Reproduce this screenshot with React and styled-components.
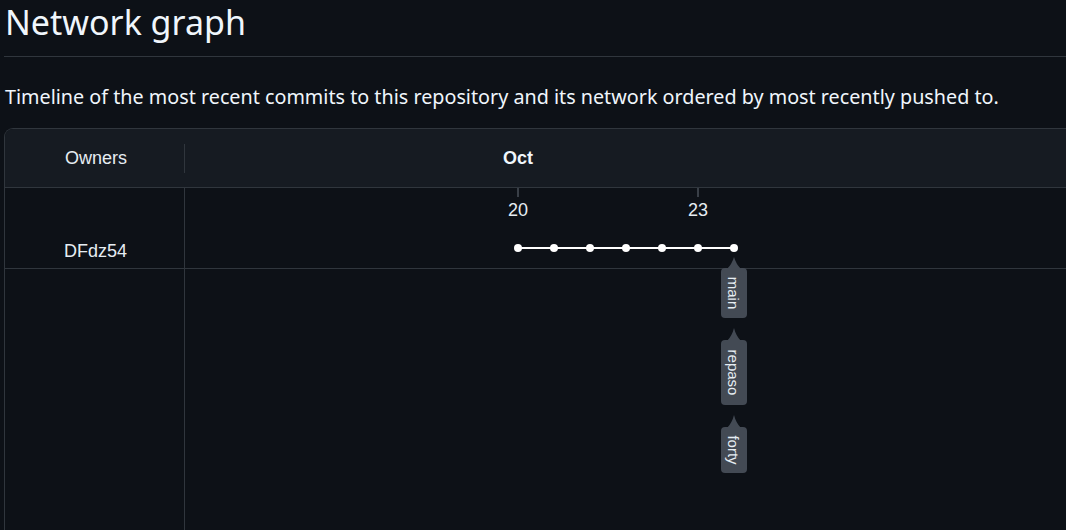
import React from "react";
import styled, { createGlobalStyle } from "styled-components";

const GlobalStyle = createGlobalStyle`
  html, body {
    margin: 0;
    padding: 0;
    background: #0d1117;
    color: #e6edf3;
    overflow: hidden;
  }
`;

const commits = [0, 1, 2, 3, 4, 5, 6];
const days = [
  { label: "20", x: 333 },
  { label: "23", x: 513 },
];
const branches = [
  { name: "main", tip: 69, top: 80, bottom: 130 },
  { name: "repaso", tip: 140, top: 152, bottom: 217 },
  { name: "forty", tip: 227, top: 239, bottom: 285 },
];

export default function App() {
  const headX = 333 + 36 * 6;
  return (
    <>
      <GlobalStyle />
      <Page>
        <Subhead>
          <Title>Network graph</Title>
        </Subhead>
        <Description>
          Timeline of the most recent commits to this repository and its network ordered by most recently pushed to.
        </Description>
        <GraphBox>
          <HeaderRow>
            <OwnersHead>Owners</OwnersHead>
            <MonthHead>
              <Month>Oct</Month>
            </MonthHead>
          </HeaderRow>
          <Body>
            <OwnerRow>
              <OwnerCell>DFdz54</OwnerCell>
              <GraphCell />
            </OwnerRow>
            <FillRow>
              <OwnerCell />
              <GraphCell />
            </FillRow>
            <Canvas width="900" height="360">
              {days.map((d) => (
                <g key={d.label}>
                  <line x1={d.x} y1={0} x2={d.x} y2={9} stroke="#484f58" strokeWidth="1.5" />
                  <DayLabel x={d.x} y={28} textAnchor="middle">{d.label}</DayLabel>
                </g>
              ))}
              <line x1={333} y1={60} x2={headX} y2={60} stroke="#ffffff" strokeWidth="2" />
              {commits.map((i) => (
                <circle key={i} cx={333 + 36 * i} cy={60} r="4" fill="#ffffff" />
              ))}
              {branches.map((b) => (
                <g key={b.name}>
                  <path
                    d={`M${headX} ${b.tip} Q${headX + 2} ${b.top - 4} ${headX + 7} ${b.top + 1} L${headX - 7} ${b.top + 1} Q${headX - 2} ${b.top - 4} ${headX} ${b.tip} Z`}
                    fill="#434a54"
                  />
                  <rect x={headX - 13} y={b.top} width="26" height={b.bottom - b.top} rx="4" fill="#434a54" />
                  <BranchLabel
                    transform={`translate(${headX - 1} ${(b.top + b.bottom) / 2}) rotate(90)`}
                    textAnchor="middle"
                    dominantBaseline="central"
                  >
                    {b.name}
                  </BranchLabel>
                </g>
              ))}
            </Canvas>
          </Body>
        </GraphBox>
      </Page>
    </>
  );
}

const Page = styled.div`
  padding-left: 4px;
  font-family: "Noto Sans", "Open Sans", sans-serif;
`;

const Subhead = styled.div`
  border-bottom: 1px solid #30363d;
  padding-bottom: 11px;
`;

const Title = styled.h2`
  margin: 0;
  padding-left: 1px;
  font-size: 34px;
  font-weight: 400;
  line-height: 45px;
  color: #f0f6fc;
`;

const Description = styled.p`
  margin: 25px 0 16px 1px;
  font-size: 19.75px;
  line-height: 30px;
  color: #f0f6fc;
`;

const GraphBox = styled.div`
  width: 1100px;
  border: 1px solid #30363d;
  border-right: none;
  border-top-left-radius: 9px;
  overflow: hidden;
  font-family: "Liberation Sans", Arial, sans-serif;
  font-size: 18px;
`;

const HeaderRow = styled.div`
  display: grid;
  grid-template-columns: 180px 1fr;
  height: 58px;
  background: #161b22;
  border-bottom: 1px solid #30363d;
`;

const OwnersHead = styled.div`
  display: flex;
  align-items: center;
  justify-content: center;
  padding-left: 2px;
  color: #e6edf3;
  position: relative;
  &:after {
    content: "";
    position: absolute;
    right: 0;
    top: 15px;
    bottom: 14px;
    width: 1px;
    background: #30363d;
  }
`;

const MonthHead = styled.div`
  display: flex;
  align-items: center;
  padding-left: 318px;
`;

const Month = styled.span`
  font-weight: 700;
  color: #f0f6fc;
`;

const Body = styled.div`
  position: relative;
  display: flex;
  flex-direction: column;
  height: 360px;
`;

const OwnerRow = styled.div`
  display: grid;
  grid-template-columns: 180px 1fr;
  height: 80px;
  border-bottom: 1px solid #30363d;
`;

const FillRow = styled.div`
  display: grid;
  grid-template-columns: 180px 1fr;
  flex: 1;
`;

const OwnerCell = styled.div`
  display: flex;
  align-items: flex-end;
  justify-content: center;
  padding: 0 0 6px 2px;
  border-right: 1px solid #30363d;
  color: #e6edf3;
`;

const GraphCell = styled.div``;

const Canvas = styled.svg`
  position: absolute;
  left: 180px;
  top: 0;
  overflow: visible;
`;

const DayLabel = styled.text`
  fill: #e6edf3;
  font-family: "Liberation Sans", Arial, sans-serif;
  font-size: 18px;
`;

const BranchLabel = styled.text`
  fill: #e6edf3;
  font-family: "Liberation Sans", Arial, sans-serif;
  font-size: 15px;
`;
